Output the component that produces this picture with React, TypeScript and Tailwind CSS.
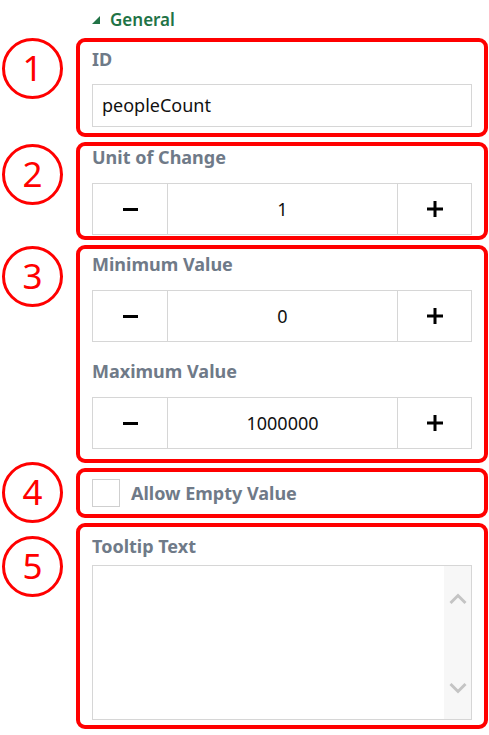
import React from 'react'

const labelCls = "block font-['Noto_Sans',sans-serif] font-bold text-[18px] leading-[22px] text-[#6f7a88]"

function Circle({ n, className = '' }: { n: number; className?: string }) {
  return (
    <div className={`ml-[2px] w-[61px] h-[61px] shrink-0 rounded-full border-[3px] border-[#ff0000] flex items-center justify-center ${className}`}>
      <span className="font-['Noto_Sans',sans-serif] font-normal text-[35px] leading-none text-[#ff0000] -mt-[2px]">{n}</span>
    </div>
  )
}

function MinusIcon() {
  return (
    <svg width="15" height="3" viewBox="0 0 15 3">
      <rect x="0" y="0" width="15" height="3" fill="#000" />
    </svg>
  )
}

function PlusIcon() {
  return (
    <svg width="16" height="16" viewBox="0 0 16 16">
      <rect x="0" y="6.5" width="16" height="3" fill="#000" />
      <rect x="6.5" y="0" width="3" height="16" fill="#000" />
    </svg>
  )
}

function Stepper({ value }: { value: string }) {
  return (
    <div className="flex h-[52px] w-[380px] border border-[#d6d6d6] bg-white">
      <button className="w-[75px] shrink-0 border-r border-[#d6d6d6] flex items-center justify-center">
        <MinusIcon />
      </button>
      <div className="flex-1 flex items-center justify-center font-['Noto_Sans',sans-serif] text-[18px] text-[#111]">
        {value}
      </div>
      <button className="w-[74px] shrink-0 border-l border-[#d6d6d6] flex items-center justify-center">
        <PlusIcon />
      </button>
    </div>
  )
}

export default function App() {
  return (
    <div className="w-[489px] h-[735px] bg-white overflow-hidden">
      {/* Section header */}
      <div className="h-[38px] pl-[92px] flex items-center gap-[10px]">
        <svg width="8" height="8" viewBox="0 0 8 8" className="mt-[2px]">
          <polygon points="8,0 8,8 0,8" fill="#217346" />
        </svg>
        <span className="font-['Noto_Sans',sans-serif] font-semibold text-[17px] leading-none text-[#217346]">General</span>
      </div>

      <div className="flex flex-col">
        {/* 1 - ID */}
        <div className="flex items-start">
          <div className="w-[76px] shrink-0">
            <Circle n={1} />
          </div>
          <div className="w-[412px] h-[99px] border-4 border-[#ff0000] rounded-[9px] px-[12px] pt-[6px]">
            <span className={labelCls}>ID</span>
            <div className="mt-[14px] h-[43px] w-[380px] border border-[#d6d6d6] flex items-center pl-[9px] font-['Noto_Sans',sans-serif] text-[18px] text-[#111]">
              peopleCount
            </div>
          </div>
        </div>

        {/* 2 - Unit of change */}
        <div className="flex items-start mt-[5px]">
          <div className="w-[76px] shrink-0 pt-[2px]">
            <Circle n={2} />
          </div>
          <div className="w-[412px] h-[98px] border-4 border-[#ff0000] rounded-[9px] px-[12px] pt-0">
            <span className={labelCls}>Unit of Change</span>
            <div className="mt-[15px]">
              <Stepper value="1" />
            </div>
          </div>
        </div>

        {/* 3 - Min / Max */}
        <div className="flex items-start mt-[5px]">
          <div className="w-[76px] shrink-0 pt-[1px]">
            <Circle n={3} />
          </div>
          <div className="w-[412px] h-[218px] border-4 border-[#ff0000] rounded-[9px] px-[12px] pt-[4px]">
            <span className={labelCls}>Minimum Value</span>
            <div className="mt-[15px]">
              <Stepper value="0" />
            </div>
            <span className={`${labelCls} mt-[18px]`}>Maximum Value</span>
            <div className="mt-[15px]">
              <Stepper value="1000000" />
            </div>
          </div>
        </div>

        {/* 4 - Allow empty */}
        <div className="flex items-center mt-[4px]">
          <div className="w-[76px] shrink-0 -my-[5px]">
            <Circle n={4} />
          </div>
          <div className="w-[412px] h-[50px] border-4 border-[#ff0000] rounded-[9px] px-[12px] flex items-center gap-[11px]">
            <div className="w-[28px] h-[28px] border border-[#cfcfcf] bg-white" />
            <span className={labelCls}>Allow Empty Value</span>
          </div>
        </div>

        {/* 5 - Tooltip */}
        <div className="flex items-start mt-[5px]">
          <div className="w-[76px] shrink-0 pt-[13px]">
            <Circle n={5} />
          </div>
          <div className="w-[412px] h-[206px] border-4 border-[#ff0000] rounded-[9px] px-[12px] pt-[8px]">
            <span className={labelCls}>Tooltip Text</span>
            <div className="mt-[8px] h-[155px] w-[380px] border border-[#d6d6d6] flex justify-end">
              <div className="w-[27px] bg-[#f7f7f7] flex flex-col items-center justify-between pt-[27px] pb-[25px]">
                <svg width="18" height="12" viewBox="0 0 18 12">
                  <polyline points="1.5,10 9,2.5 16.5,10" fill="none" stroke="#c4c4c4" strokeWidth="3" />
                </svg>
                <svg width="18" height="12" viewBox="0 0 18 12">
                  <polyline points="1.5,2 9,9.5 16.5,2" fill="none" stroke="#c4c4c4" strokeWidth="3" />
                </svg>
              </div>
            </div>
          </div>
        </div>
      </div>
    </div>
  )
}
